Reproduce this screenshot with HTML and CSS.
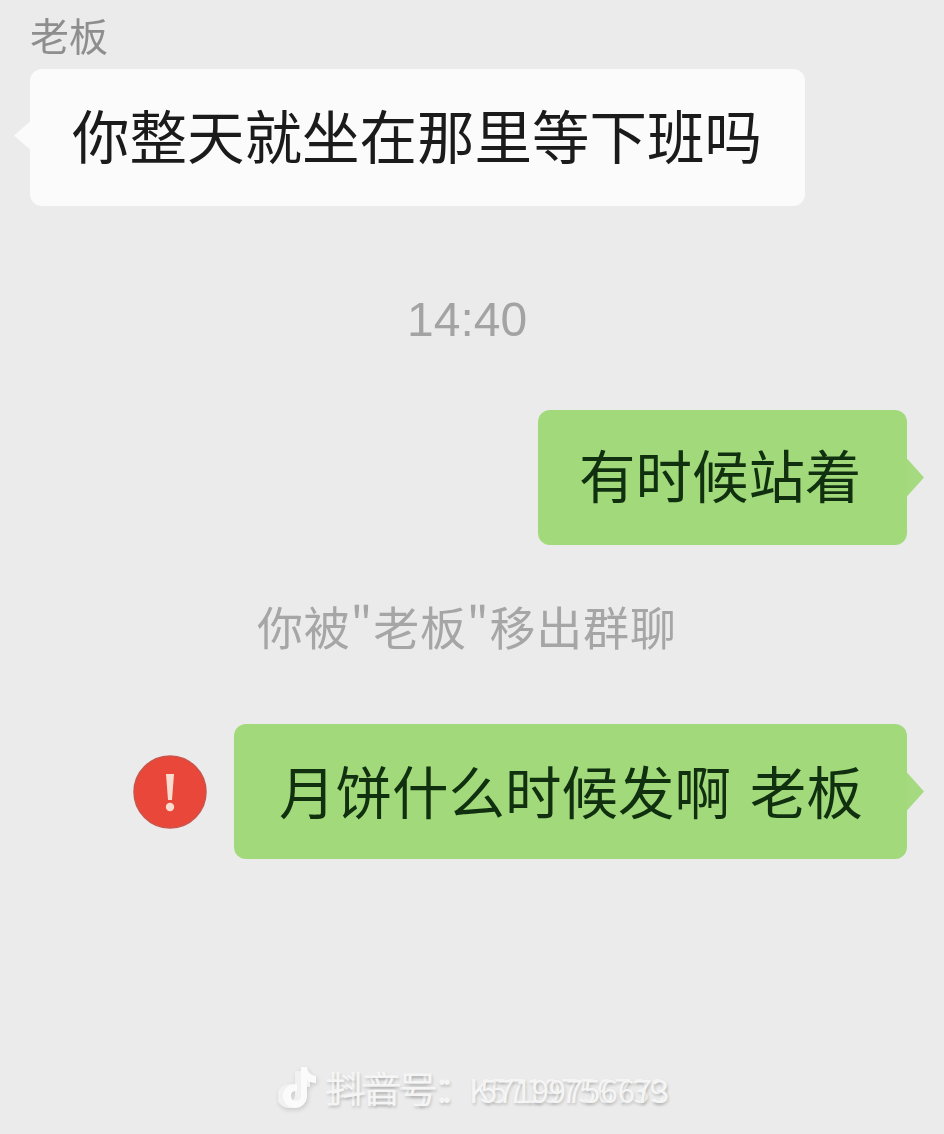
FILE: index.html
```html
<!DOCTYPE html>
<html lang="zh-CN">
<head>
<meta charset="utf-8">
<title>聊天</title>
<link rel="stylesheet" href="styles.css">
</head>
<body>
<main class="chat">
  <div class="sender">老板</div>
  <div class="row row-left">
    <div class="bubble bubble-white">你整天就坐在那里等下班吗</div>
  </div>
  <div class="time">14:40</div>
  <div class="row row-right">
    <div class="bubble bubble-green bubble-short">有时候站着</div>
  </div>
  <div class="notice">你被"老板"移出群聊</div>
  <div class="row row-right row-last">
    <svg class="alert" viewBox="0 0 74 74" aria-hidden="true">
      <circle cx="37" cy="37" r="36" fill="#e8473a" stroke="#c9544c" stroke-width="1.500"/>
      <path d="M33 19h8l-2 26h-4z" fill="#f8dccf"/>
      <circle cx="37" cy="52" r="4.200" fill="#f8dccf"/>
    </svg>
    <div class="bubble bubble-green bubble-long">月饼什么时候发啊 老板</div>
  </div>
  <div class="mark">
    <svg class="mark-icon" viewBox="0 0 44 44" aria-hidden="true">
      <path class="mark-back" d="M17 5h6c.6 5 4 8.500 9 9v7c-3.400 0-6.500-1-9-2.800V30a12 12 0 1 1-12-12h2v7h-2a5 5 0 1 0 6 5z"/>
      <path class="mark-front" d="M23 1h6c.6 5 4 8.500 9 9v7c-3.400 0-6.500-1-9-2.800V30a12 12 0 1 1-12-12h2v7h-2a5 5 0 1 0 6 5z"/>
    </svg>
    <div class="mark-text">
      <span class="mark-layer">抖音号：<span class="mark-id">K5719756739</span></span>
      <span class="mark-layer mark-over">抖音号：<span class="mark-id mark-id-over">57199756673</span></span>
    </div>
  </div>
</main>
</body>
</html>
```

FILE: styles.css
```css
* {
  box-sizing: border-box;
}

html,
body {
  margin: 0;
  padding: 0;
}

body {
  width: 944px;
  height: 1134px;
  overflow: hidden;
  background: #ebebeb;
  font-family: "Noto Sans CJK SC", "Liberation Sans", sans-serif;
}

.chat {
  display: flex;
  flex-direction: column;
  height: 1134px;
  padding: 12px 37px 0 30px;
}

.sender {
  height: 57px;
  margin-top: -3px;
  margin-bottom: 3px;
  font-size: 39px;
  line-height: 50px;
  color: #8e8e8e;
  filter: blur(0.4px);
}

.row {
  display: flex;
  align-items: center;
}

.row-right {
  justify-content: flex-end;
}

.row-last {
  gap: 27px;
}

.bubble {
  position: relative;
  display: flex;
  align-items: center;
  height: 135px;
  border-radius: 12px;
  font-size: 56.500px;
  line-height: 1;
  white-space: nowrap;
}

.bubble::after {
  content: "";
  position: absolute;
  top: 50%;
}

.bubble-white {
  width: 775px;
  height: 137px;
  padding-left: 42px;
  padding-bottom: 6px;
  background: #fbfbfb;
  color: #1b1b1b;
  font-size: 57.500px;
  filter: blur(0.4px);
}

.bubble-white::after {
  right: 100%;
  width: 16px;
  height: 28px;
  margin-top: -16px;
  background: #fbfbfb;
  clip-path: polygon(100% 0, 0 50%, 100% 100%);
}

.bubble-green {
  background: #a2da7b;
  color: #10300f;
  filter: blur(0.4px);
}

.bubble-green::after {
  left: 100%;
  width: 17px;
  height: 38px;
  margin-top: -19px;
  background: #a6da80;
  clip-path: polygon(0 0, 100% 50%, 0 100%);
}

.bubble-short {
  width: 369px;
  padding-left: 41px;
  padding-bottom: 9px;
}

.bubble-long {
  width: 673px;
  padding-left: 45px;
  padding-bottom: 5px;
  word-spacing: 6px;
}

.time {
  margin-top: 87px;
  margin-bottom: -1px;
  height: 118px;
  padding-left: 377px;
  font-family: "Liberation Sans", sans-serif;
  font-size: 48px;
  line-height: 54px;
  color: #a3a3a3;
  filter: blur(0.4px);
}

.notice {
  margin-top: 50px;
  height: 129px;
  padding-left: 227px;
  font-size: 46px;
  line-height: 60px;
  letter-spacing: 0.8px;
  color: #a6a6a6;
  white-space: nowrap;
  filter: blur(0.4px);
}

.alert {
  flex: none;
  width: 74px;
  height: 74px;
  filter: blur(0.4px);
}

.mark {
  display: flex;
  align-items: center;
  gap: 3px;
  margin-top: 204px;
  margin-left: 248px;
  height: 50px;
}

.mark-icon {
  flex: none;
  width: 44px;
  height: 44px;
  filter: drop-shadow(1px 2px 2px rgba(0, 0, 0, 0.14));
}

.mark-back {
  fill: #f1f1f1;
}

.mark-front {
  fill: #fbfbfb;
}

.mark-text {
  position: relative;
  font-size: 36px;
  line-height: 44px;
  color: #f5f5f5;
  white-space: nowrap;
  text-shadow: 1px 2px 3px rgba(0, 0, 0, 0.16);
}

.mark-layer {
  display: block;
}

.mark-over {
  position: absolute;
  top: 0;
  left: 5px;
}

.mark-id {
  font-size: 32px;
}

.mark-id-over {
  margin-left: 6px;
  font-size: 31px;
}
```
